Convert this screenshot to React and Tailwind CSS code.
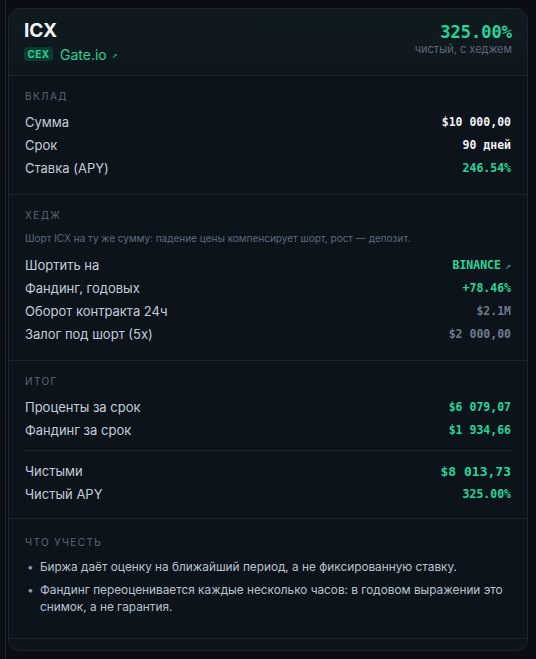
import React from 'react';

const mono = { fontFamily: '"DejaVu Sans Mono", "Liberation Mono", monospace' };

function SectionTitle({ children }) {
  return <div className="h-3 text-[10px] leading-3 tracking-[0.14em] uppercase text-[#5b6676]">{children}</div>;
}

function Row({ label, value, tone = 'white', big = false, arrow = false }) {
  const colors = {
    white: 'text-[#eef2f7]',
    green: 'text-[#22d69a]',
    muted: 'text-[#6c7a8c]',
  };
  return (
    <div className="h-[23px] flex items-center justify-between">
      <span className="text-[13px] text-[#c3cdd9]">{label}</span>
      <span style={mono} className={`${big ? 'text-[13px]' : 'text-[11.5px]'} font-bold ${colors[tone]} flex items-center gap-[4px]`}>
        {value}
        {arrow && <span className="text-[10px] font-normal text-[#1fae80]">↗</span>}
      </span>
    </div>
  );
}

export default function App() {
  return (
    <div className="h-[659px] w-[536px] flex bg-[#0a0d13] overflow-hidden" style={{ fontFamily: 'Inter, "Noto Sans", sans-serif' }}>
      <div className="w-[6px] h-full border-r border-[#1c2532]" />
      <div className="ml-[2px] mt-[8px] w-[520px] h-[643px] rounded-[12px] border border-[#1c2530] bg-[#0d131b] overflow-hidden flex flex-col">
        {/* header */}
        <div className="px-[15px] pt-[10px] pb-[14px] border-b border-[#1a222c] bg-gradient-to-b from-[#0f1a1f] to-[#0e171d] flex justify-between">
          <div>
            <div className="text-[19px] leading-6 font-bold text-[#f2f5f8]">ICX</div>
            <div className="mt-[4px] flex items-center h-[14px]">
              <span className="h-[14px] w-[29px] rounded-[3px] bg-[#0c3a2c] text-[#22d69a] text-[10px] font-bold flex items-center justify-center tracking-[0.04em]">CEX</span>
              <span className="ml-[7px] text-[14px] text-[#22d69a]">Gate.io</span>
              <span style={mono} className="ml-[5px] text-[10px] text-[#1fae80]">↗</span>
            </div>
          </div>
          <div className="flex flex-col items-end">
            <div style={mono} className="mt-[2px] text-[17px] leading-[22px] font-bold text-[#22d69a]">325.00%</div>
            <div className="text-[11px] leading-[12px] text-[#5b6777]">чистый, с хеджем</div>
          </div>
        </div>

        {/* deposit */}
        <div className="px-[16px] pt-[14px] pb-[14px] border-b border-[#1a222c]">
          <SectionTitle>Вклад</SectionTitle>
          <div className="mt-[9px]">
            <Row label="Сумма" value="$10 000,00" />
            <Row label="Срок" value="90 дней" />
            <Row label="Ставка (APY)" value="246.54%" tone="green" />
          </div>
        </div>

        {/* hedge */}
        <div className="px-[16px] pt-[14px] pb-[14px] border-b border-[#1a222c]">
          <SectionTitle>Хедж</SectionTitle>
          <div className="mt-[10px] text-[10px] leading-[14px] text-[#5d6a7b]">
            Шорт ICX на ту же сумму: падение цены компенсирует шорт, рост — депозит.
          </div>
          <div className="mt-[9px]">
            <Row label="Шортить на" value="BINANCE" tone="green" arrow />
            <Row label="Фандинг, годовых" value="+78.46%" tone="green" />
            <Row label="Оборот контракта 24ч" value="$2.1M" tone="muted" />
            <Row label="Залог под шорт (5x)" value="$2 000,00" tone="muted" />
          </div>
        </div>

        {/* totals */}
        <div className="px-[16px] pt-[14px] pb-[12px] border-b border-[#1a222c]">
          <SectionTitle>Итог</SectionTitle>
          <div className="mt-[9px]">
            <Row label="Проценты за срок" value="$6 079,07" tone="green" />
            <Row label="Фандинг за срок" value="$1 934,66" tone="green" />
          </div>
          <div className="mt-[8px] border-t border-[#1f2733]" />
          <div className="mt-[9px]">
            <Row label="Чистыми" value="$8 013,73" tone="green" big />
            <Row label="Чистый APY" value="325.00%" tone="green" />
          </div>
        </div>

        {/* notes */}
        <div className="px-[16px] pt-[17px] pb-[22px] border-b border-[#1a222c]">
          <SectionTitle>Что учесть</SectionTitle>
          <ul className="mt-[11px] flex flex-col gap-[6px] text-[11.8px] leading-[17px] text-[#b8c3cf]">
            <li className="flex">
              <span className="w-[15px] shrink-0 pl-[2px] text-[#8b97a5]">•</span>
              <span>Биржа даёт оценку на ближайший период, а не фиксированную ставку.</span>
            </li>
            <li className="flex">
              <span className="w-[15px] shrink-0 pl-[2px] text-[#8b97a5]">•</span>
              <span>Фандинг переоценивается каждые несколько часов: в годовом выражении это снимок, а не гарантия.</span>
            </li>
          </ul>
        </div>
        <div className="flex-1" />
      </div>
    </div>
  );
}
